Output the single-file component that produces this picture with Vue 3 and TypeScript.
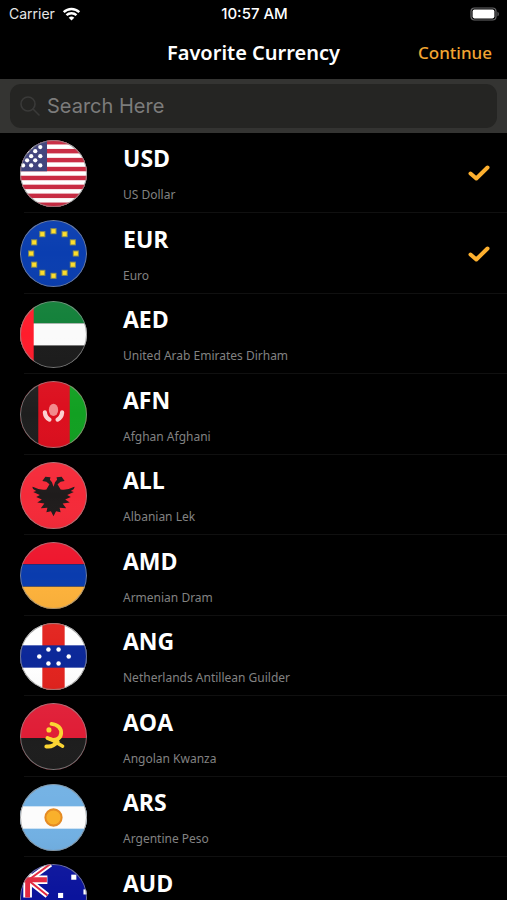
<script setup lang="ts">
import { computed, ref } from 'vue'

interface Currency {
  code: string
  name: string
}

const currencies: Currency[] = [
  { code: 'USD', name: 'US Dollar' },
  { code: 'EUR', name: 'Euro' },
  { code: 'AED', name: 'United Arab Emirates Dirham' },
  { code: 'AFN', name: 'Afghan Afghani' },
  { code: 'ALL', name: 'Albanian Lek' },
  { code: 'AMD', name: 'Armenian Dram' },
  { code: 'ANG', name: 'Netherlands Antillean Guilder' },
  { code: 'AOA', name: 'Angolan Kwanza' },
  { code: 'ARS', name: 'Argentine Peso' },
  { code: 'AUD', name: 'Australian Dollar' },
]

const query = ref('')
const favorites = ref<string[]>(['USD', 'EUR'])

const visible = computed(() => {
  const q = query.value.trim().toLowerCase()
  return currencies.filter((c) => `${c.code} ${c.name}`.toLowerCase().includes(q))
})

const usStars: [number, number][] = [
  [11, 7], [20, 7], [7, 11], [15, 11], [11, 16], [20, 16],
  [7, 20], [15, 20], [3, 25], [11, 25], [20, 25],
]

const euStars = Array.from({ length: 12 }, (_, i) => ({
  x: 33 + 22 * Math.sin((i * Math.PI) / 6),
  y: 33 - 22 * Math.cos((i * Math.PI) / 6),
}))

const antilleanStars: [number, number][] = [
  [19, 33], [28, 26], [38, 26], [48, 33], [38, 40], [28, 40],
]
</script>

<template>
  <main class="screen">
    <div class="status">
      <div class="carrier">
        <span>Carrier</span>
        <svg class="wifi" viewBox="0 0 18 14" aria-hidden="true">
          <path d="M1.2 5.2a11.2 11.2 0 0 1 15.6 0" />
          <path d="M4 8.2a7.2 7.2 0 0 1 10 0" />
          <path class="solid" d="M9 13.6 6.2 10.8a4 4 0 0 1 5.6 0z" />
        </svg>
      </div>
      <span class="clock">10:57 AM</span>
      <svg class="battery" viewBox="0 0 30 14" aria-hidden="true">
        <rect x="1" y="1" width="25" height="12" rx="3.5" fill="none" stroke="#68686a" stroke-width="1.2" />
        <rect x="2.6" y="2.6" width="21.8" height="8.8" rx="1.8" fill="#fff" />
        <path d="M27.5 4.7c1.7.6 1.7 4 0 4.6z" fill="#68686a" />
      </svg>
    </div>

    <header class="nav">
      <h1>Favorite Currency</h1>
      <button type="button" class="continue">Continue</button>
    </header>

    <form class="search" role="search" @submit.prevent>
      <label class="field">
        <svg viewBox="0 0 20 20" aria-hidden="true">
          <circle cx="8" cy="8" r="7" />
          <path d="M13 13l6 6" />
        </svg>
        <input v-model="query" type="text" placeholder="Search Here" aria-label="Search Here" />
      </label>
    </form>

    <ul class="list">
      <li v-for="c in visible" :key="c.code">
        <label class="row">
          <svg class="flag" viewBox="0 0 66 66" aria-hidden="true">
            <defs>
              <linearGradient :id="`shade-${c.code}`" x1="0" y1="0" x2="0" y2="1">
                <stop offset="0" stop-color="#fff" stop-opacity="0.03" />
                <stop offset="0.5" stop-color="#fff" stop-opacity="0" />
                <stop offset="1" stop-color="#000" stop-opacity="0.03" />
              </linearGradient>
            </defs>
            <g v-if="c.code === 'USD'">
              <rect width="66" height="66" fill="#fff" />
              <rect v-for="n in 8" :key="n" :y="(n - 1) * 8.8" width="66" height="4.4" fill="#c92a42" />
              <rect width="26.6" height="30.8" fill="#40437c" />
              <circle v-for="([x, y], i) in usStars" :key="i" :cx="x" :cy="y" r="2.1" fill="#fff" />
            </g>
            <g v-else-if="c.code === 'EUR'">
              <rect width="66" height="66" fill="#0a3eb0" />
              <g v-for="(s, i) in euStars" :key="i">
                <rect :x="s.x - 3" :y="s.y - 3" width="6" height="6" fill="#8d9152" />
                <rect :x="s.x - 2" :y="s.y - 2" width="4" height="4" fill="#ffdf2c" />
              </g>
            </g>
            <g v-else-if="c.code === 'AED'">
              <rect width="66" height="22" fill="#128039" />
              <rect y="22" width="66" height="22" fill="#fafafa" />
              <rect y="44" width="66" height="22" fill="#1c1c1c" />
              <rect width="13.5" height="66" fill="#ff1c2c" />
            </g>
            <g v-else-if="c.code === 'AFN'">
              <rect width="66" height="66" fill="#dc0f1e" />
              <rect width="18" height="66" fill="#1e1e1e" />
              <rect x="49" width="17" height="66" fill="#12a022" />
              <ellipse cx="33" cy="28.5" rx="4.6" ry="6" fill="#f28a8c" />
              <path d="M24.5 31q.5 5 4.5 7M41.5 31q-.5 5-4.5 7" fill="none" stroke="#fbd0d0" stroke-width="4.2" stroke-linecap="round" />
            </g>
            <g v-else-if="c.code === 'ALL'">
              <rect width="66" height="66" fill="#f52a39" />
              <path
                d="M33 53.5L30.500 48.500 26 49.500 27 45 20.500 45.500 24 41 17 40 21.500 37 16 34.500 19.500 32.500 13 29.500 16 28.500Q11.500 26.500 12.500 24.500Q19 28 26 27L29 22 26 19.500 22 18.800 25 14.500 30 15 29.500 17.500 31.500 20 33 24.500 34.500 20 36.500 17.500 36 15 41 14.500 44 18.800 40 19.500 37 22 40 27Q47 28 53.500 24.500Q54.500 26.500 50 28.500L53 29.500 46.500 32.500 50 34.500 44.500 37 49 40 42 41 45.500 45.500 39 45 40 49.500 35.500 48.500Z"
                fill="#1f1c1c"
              />
            </g>
            <g v-else-if="c.code === 'AMD'">
              <rect width="66" height="22" fill="#ee152c" />
              <rect y="22" width="66" height="22" fill="#0a3cae" />
              <rect y="44" width="66" height="22" fill="#fdb23b" />
            </g>
            <g v-else-if="c.code === 'ANG'">
              <rect width="66" height="66" fill="#fff" />
              <rect x="22" width="22" height="66" fill="#e2231e" />
              <rect y="22" width="66" height="22" fill="#0c2899" />
              <circle v-for="([x, y], i) in antilleanStars" :key="i" :cx="x" :cy="y" r="2.2" fill="#fff" />
            </g>
            <g v-else-if="c.code === 'AOA'">
              <rect width="66" height="66" fill="#e01d36" />
              <rect y="34.5" width="66" height="32" fill="#1d1d1d" />
              <g fill="none" stroke="#fbd532" stroke-linecap="round">
                <path d="M31 20.5C37 21 41 25 40.5 30C40 35.5 34 38.5 27 34.5" stroke-width="3.8" />
                <path d="M30 35.5L42 42.5" stroke-width="3.4" />
                <path d="M26 42.8C31 43.5 34 42 37 38" stroke-width="4" />
              </g>
              <circle cx="28.5" cy="26.5" r="2.5" fill="#fbd532" />
            </g>
            <g v-else-if="c.code === 'ARS'">
              <rect width="66" height="66" fill="#72b1e4" />
              <rect y="22" width="66" height="22" fill="#fcfcfc" />
              <circle cx="33" cy="33" r="8" fill="#f9b02b" stroke="#e58b24" stroke-width="2" />
            </g>
            <g v-else-if="c.code === 'AUD'">
              <rect width="66" height="66" fill="#0a139c" />
              <path d="M30 0L8 16M8 16L27 31" stroke="#fff" stroke-width="5.5" />
              <path d="M0 15.5h27M7.5 9v24" stroke="#fff" stroke-width="8.5" />
              <path d="M30 0L10 14.5M10 17.5L27 31" stroke="#e3283f" stroke-width="2" />
              <path d="M0 15.5h26.5M7.5 13v20" stroke="#e3283f" stroke-width="4.8" />
              <g fill="#fff">
                <rect x="50.5" y="10.5" width="5" height="5" />
                <rect x="37.5" y="28.5" width="5" height="5" />
                <rect x="62.5" y="25" width="4" height="5" />
                <rect x="50" y="46" width="5" height="5" />
              </g>
            </g>
            <rect width="66" height="66" :fill="`url(#shade-${c.code})`" />
            <circle cx="33" cy="33" r="32.5" fill="none" stroke="#8c8c8c" stroke-width="1" stroke-opacity="0.8" />
          </svg>
          <span class="text">
            <span class="code">{{ c.code }}</span>
            <span class="name">{{ c.name }}</span>
          </span>
          <span class="pick">
            <input v-model="favorites" type="checkbox" :value="c.code" />
            <svg v-if="favorites.includes(c.code)" viewBox="0 0 22 16" aria-hidden="true">
              <path d="M2.5 8.5l5.8 5L19.5 2.5" />
            </svg>
          </span>
        </label>
      </li>
    </ul>
  </main>
</template>

<style>
body {
  background: #000;
}
</style>

<style scoped>
.screen {
  display: flex;
  flex-direction: column;
  height: 100vh;
  overflow: hidden;
  background: #000;
  color: #fff;
  font-family: 'Noto Sans', 'Open Sans', sans-serif;
}

.status {
  display: grid;
  grid-template-columns: 1fr auto 1fr;
  align-items: center;
  height: 26px;
  padding: 1px 7px 0 9px;
  font: 500 15px/20px Inter, sans-serif;
  box-sizing: border-box;
}

.carrier {
  display: flex;
  align-items: center;
  gap: 7px;
  font-weight: 400;
  font-size: 14px;
  color: #e6e6e6;
}

.wifi {
  width: 19px;
  height: 14px;
  fill: none;
  stroke: #fff;
  stroke-width: 2.4;
}

.wifi .solid {
  fill: #fff;
  stroke: none;
}

.battery {
  justify-self: end;
  width: 30px;
  height: 14px;
}

.nav {
  display: grid;
  grid-template-columns: 1fr auto 1fr;
  align-items: center;
  height: 53px;
  padding: 0 15px;
}

h1 {
  grid-column: 2;
  margin: 0;
  font-size: 20px;
  font-weight: 600;
  line-height: 28px;
}

.continue {
  justify-self: end;
  padding: 0;
  border: 0;
  background: none;
  color: #f2a532;
  font: inherit;
  font-size: 17px;
  font-weight: 500;
  line-height: 28px;
  cursor: pointer;
}

.search {
  padding: 5px 10px;
  background: #343432;
}

.field {
  display: flex;
  align-items: center;
  gap: 7px;
  height: 44px;
  padding: 0 10px;
  border-radius: 11px;
  background: #252523;
}

.field svg {
  width: 20px;
  height: 20px;
  fill: none;
  stroke: #3a3a39;
  stroke-width: 1.6;
  stroke-linecap: round;
}

.field input {
  flex: 1;
  min-width: 0;
  padding: 0;
  border: 0;
  outline: none;
  background: none;
  color: #fff;
  font: 400 20px/28px Inter, sans-serif;
}

.field input::placeholder {
  color: #7c7c7b;
  opacity: 1;
}

.list {
  flex: 1;
  min-height: 0;
  margin: 0;
  padding: 0;
  overflow-y: auto;
  scrollbar-width: none;
  list-style: none;
}

.row {
  display: flex;
  align-items: center;
  box-sizing: border-box;
  height: 80px;
  margin-left: 20px;
  padding-right: 17px;
  cursor: pointer;
}

li:nth-child(even) .row {
  height: 81px;
}

li {
  background: linear-gradient(#101010, #101010) 24px 100% / 100% 1px no-repeat;
}

.flag {
  flex: none;
  width: 67px;
  height: 67px;
  border-radius: 50%;
}

.text {
  display: flex;
  flex: 1;
  flex-direction: column;
  gap: 15px;
  margin-left: 36px;
  padding-top: 1px;
}

.code {
  font-family: 'Open Sans', 'Noto Sans', sans-serif;
  font-size: 23px;
  font-weight: 700;
  line-height: 28px;
}

.name {
  color: #828282;
  font-size: 12px;
  line-height: 16px;
}

.pick {
  display: grid;
  place-items: center;
  width: 22px;
  height: 22px;
}

.pick > * {
  grid-area: 1 / 1;
}

.pick input {
  width: 22px;
  height: 22px;
  margin: 0;
  appearance: none;
}

.pick svg {
  width: 22px;
  height: 16px;
  fill: none;
  stroke: #fdb02f;
  stroke-width: 4;
  stroke-linecap: round;
  stroke-linejoin: round;
  pointer-events: none;
}
</style>
